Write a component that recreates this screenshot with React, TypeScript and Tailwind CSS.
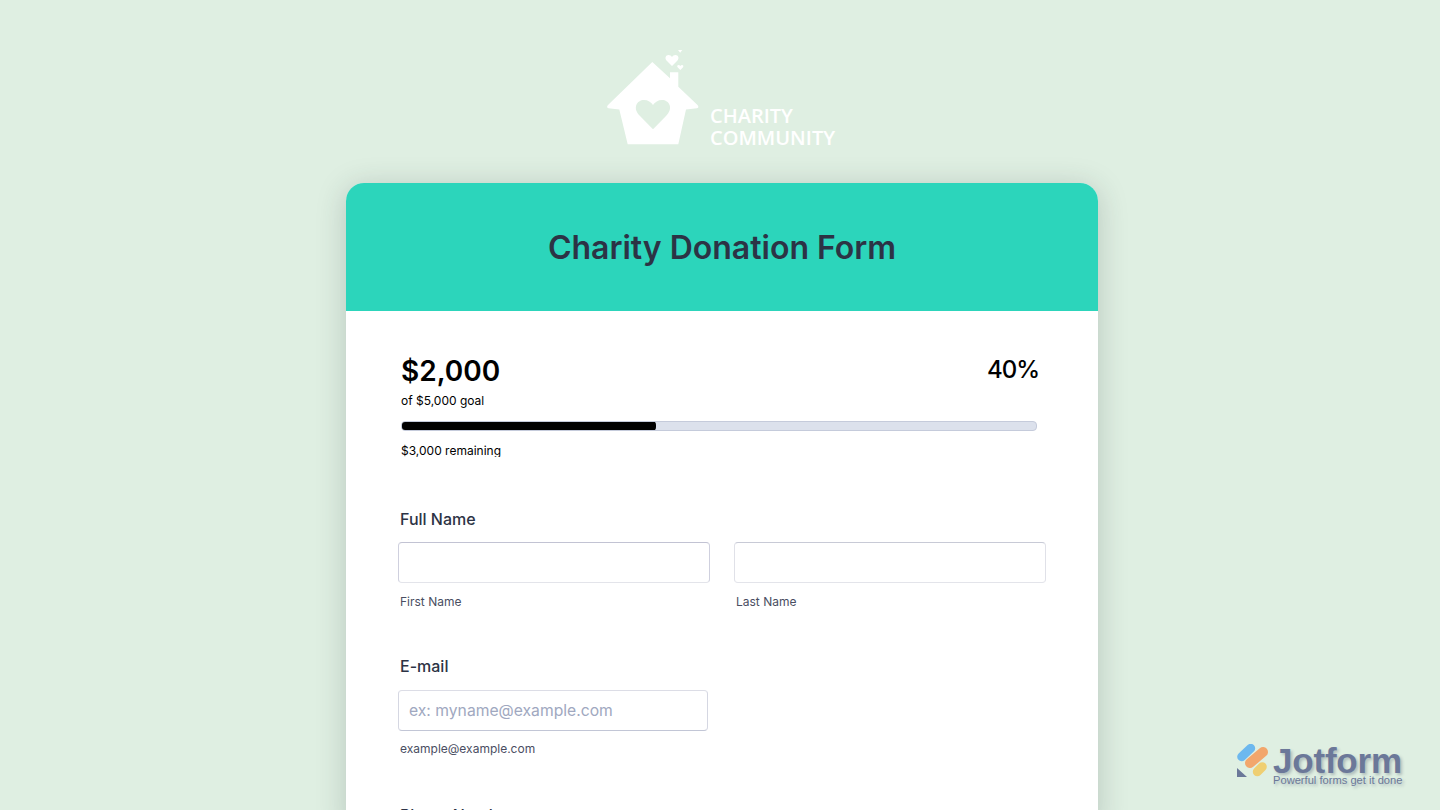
const inter = { fontFamily: 'Inter, sans-serif' }

// Logotipo da casa com corações
const HouseLogo = () => (
  <svg width="92" height="96" viewBox="0 0 92 96" className="block shrink-0">
    <path
      fill="#fff"
      d="M45.300 13 L63 29.300 L63 23.300 L71.300 23.300 L71.300 37.700 L90.500 56 Q92.500 58.500 90 59.300 L79 60.500 L71.300 95.300 L20.700 95.300 L12.300 60.500 L1.500 59.300 Q-1 58.500 1 56 Z"
    />
    <path
      fill="#dfefe2"
      d="M46 80.300 L33 67 C25 59 30 51 37 51 C41 51 44 53 46 56 C48 53 51 51 55 51 C62 51 67 59 59 67 Z"
    />
    <path
      fill="#fff"
      d="M65 17 L60 12 C57 9 59 6 61.500 6 C63 6 64.300 6.800 65 8 C65.700 6.800 67 6 68.500 6 C71 6 73 9 70 12 Z"
    />
    <path
      fill="#fff"
      d="M73.300 21 L70.800 18.500 C69.500 17 70.500 16 71.500 16 C72.200 16 72.900 16.300 73.300 17 C73.700 16.300 74.400 16 75.100 16 C76.100 16 77.100 17 75.800 18.500 Z"
    />
    <path fill="#fff" d="M71 1 L75.300 1 L73.200 3.700 Z" />
  </svg>
)

// Marca d'água do Jotform
const JotformMark = () => (
  <div className="absolute left-[1237px] top-[744px] flex w-[170px] [text-shadow:2px_2px_3px_rgba(60,70,100,0.3)]">
    <svg width="34" height="36" viewBox="0 0 34 36" className="shrink-0">
      <g fill="none" strokeLinecap="round">
        <line x1="4.700" y1="12.700" x2="13.700" y2="4.300" stroke="#6db8ee" strokeWidth="9" />
        <line x1="13" y1="19" x2="26" y2="8" stroke="#f2a66c" strokeWidth="10" />
        <line x1="20.300" y1="27.700" x2="25.300" y2="22.700" stroke="#efcf72" strokeWidth="9" />
      </g>
      <path d="M0 24 L10 33 L0 33 Z" fill="#6b7899" />
    </svg>
    <div className="ml-[2px] mt-[2px] flex flex-col font-['Liberation_Sans',sans-serif] text-[#6b7899]">
      <span className="text-[35px] font-bold leading-[30px] tracking-[-0.2px]">Jotform</span>
      <span className="text-[11.150px] leading-[8px]">Powerful forms get it done</span>
    </div>
  </div>
)

type FieldProps = {
  hint: string
  width: string
  border: string
  hintGap: string
  placeholder?: string
}

const Field = ({ hint, width, border, hintGap, placeholder }: FieldProps) => (
  <div className={width}>
    <div className={`flex h-[41px] items-center rounded-[4px] border bg-white px-[10px] text-[15.700px] text-[#a0a8c0] ${border}`}>
      {placeholder}
    </div>
    <div className={`ml-[2px] text-[12px] leading-[16px] text-[#4a4e62] ${hintGap}`}>{hint}</div>
  </div>
)

export default function App() {
  return (
    <div className="relative h-[810px] w-full overflow-hidden bg-[#dfefe2]" style={inter}>
      <div className="flex h-[183px] items-end justify-center pb-[38px]">
        <div className="ml-[2px] flex items-end">
          <HouseLogo />
          <div className="mb-[-4px] ml-[11px] font-['Open_Sans',sans-serif] text-[20px] font-semibold leading-[22px] text-white">
            <div>CHARITY</div>
            <div>COMMUNITY</div>
          </div>
        </div>
      </div>

      <main className="w-[752px] overflow-hidden rounded-t-[18px] bg-white shadow-[0_4px_30px_rgba(42,55,60,0.22)] [margin-left:346px]">
        <header className="flex h-[128px] items-center justify-center bg-[#2cd5bb] pt-[2px]">
          <h1 className="text-[32px] font-semibold leading-[40px] text-[#2c3345]">Charity Donation Form</h1>
        </header>

        <section className="px-[52px] pt-[42px]">
          {/* Meta de doação */}
          <div className="ml-[3px] w-[636px]">
            <div className="flex items-start justify-between">
              <div className="text-[28px] font-semibold leading-[36px] text-black">$2,000</div>
              <div className="mr-[-2px] text-[24px] font-medium leading-[34px] tracking-[-1px] text-black">40%</div>
            </div>
            <div className="mt-[4px] text-[12px] leading-[16px] text-black">of $5,000 goal</div>
            <div className="mt-[12px] h-[10px] w-full overflow-hidden rounded-[4px] border border-[#c5cbdb] bg-[#dce1ec]">
              <div className="ml-[-1px] mt-[-1px] h-[10px] w-[255px] rounded-[4px] bg-black" />
            </div>
            <div className="mt-[12px] h-[14px] overflow-hidden text-[12px] leading-[16px] text-black">$3,000 remaining</div>
          </div>

          {/* Nome completo */}
          <div className="ml-[2px] mt-[50px] text-[16px] font-medium leading-[24px] text-[#2c3345]">Full Name</div>
          <div className="mt-[11px] flex gap-[24px]">
            <Field hint="First Name" width="w-[312px]" border="border-[#cfd0de] border-t-[#c2c3d3] border-b-[#e3e4ea]" hintGap="mt-[11px]" />
            <Field hint="Last Name" width="w-[312px]" border="border-[#e0e1e8] border-t-[#c8cad6] border-b-[#e3e4ea]" hintGap="mt-[11px]" />
          </div>

          {/* E-mail */}
          <div className="ml-[2px] mt-[44px] text-[16px] font-medium leading-[24px] text-[#2c3345]">E-mail</div>
          <div className="mt-[12px] flex">
            <Field
              hint="example@example.com"
              width="w-[310px]"
              border="border-[#d5d7e2] border-t-[#dcdde6] border-b-[#c2c6d6]"
              hintGap="mt-[10px]"
              placeholder="ex: myname@example.com"
            />
          </div>

          <div className="ml-[2px] mt-[46px] text-[16px] font-medium leading-[24px] text-[#2c3345]">Phone Number</div>
        </section>
      </main>

      <JotformMark />
    </div>
  )
}
